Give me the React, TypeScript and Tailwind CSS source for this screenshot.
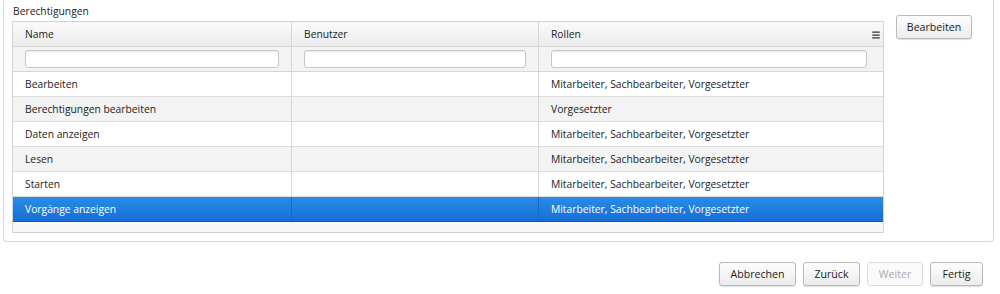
import { Menu } from 'lucide-react';

const rows = [
  { name: 'Bearbeiten', user: '', roles: 'Mitarbeiter, Sachbearbeiter, Vorgesetzter' },
  { name: 'Berechtigungen bearbeiten', user: '', roles: 'Vorgesetzter' },
  { name: 'Daten anzeigen', user: '', roles: 'Mitarbeiter, Sachbearbeiter, Vorgesetzter' },
  { name: 'Lesen', user: '', roles: 'Mitarbeiter, Sachbearbeiter, Vorgesetzter' },
  { name: 'Starten', user: '', roles: 'Mitarbeiter, Sachbearbeiter, Vorgesetzter' },
  { name: 'Vorgänge anzeigen', user: '', roles: 'Mitarbeiter, Sachbearbeiter, Vorgesetzter' },
];

function Button({ label, disabled, className = '' }: { label: string; disabled?: boolean; className?: string }) {
  return (
    <button
      className={`h-6 rounded-[3px] border text-[10.6px] leading-none ${
        disabled
          ? 'border-[#dcdcdc] bg-[#fafafa] text-[#a8a8a8]'
          : 'border-[#b9b9b9] bg-gradient-to-b from-[#fdfdfd] to-[#ececec] text-[#222] shadow-[0_1px_1px_rgba(0,0,0,0.12)]'
      } ${className}`}
    >
      {label}
    </button>
  );
}

export default function App() {
  return (
    <div className="w-[1000px] h-[294px] bg-white font-['Open_Sans',sans-serif] text-[10.3px] text-[#222]">
      <div className="mx-[3px] w-[991px] h-[242px] border-x border-b border-[#d6d6d6] rounded-b-[4px] pl-[8px] pt-[3px]">
        <div className="h-[18px] leading-[16px] pl-px">Berechtigungen</div>
        <div className="flex items-start gap-[12px]">
          <div className="w-[872px] border border-[#d2d2d2] bg-[#f7f7f7]">
            <div className="flex h-[25px] border-b border-[#d6d6d6] bg-gradient-to-b from-[#fafafa] to-[#ececec]">
              <div className="w-[279px] border-r border-[#d6d6d6] pl-[12px] flex items-center pt-px">Name</div>
              <div className="w-[247px] border-r border-[#d6d6d6] pl-[12px] flex items-center pt-px">Benutzer</div>
              <div className="flex-1 pl-[12px] flex items-center pt-px">Rollen</div>
              <div className="w-[14px] flex items-center justify-center pt-px">
                <Menu className="w-[10px] h-[10px] text-[#333]" strokeWidth={3} />
              </div>
            </div>
            <div className="flex h-[25px] border-b border-[#d6d6d6] bg-[#f3f3f3]">
              <div className="w-[279px] border-r border-[#d6d6d6] px-[12px] flex items-center">
                <input className="w-full h-[18px] rounded-[3px] border border-[#c6c6c6] bg-white shadow-[inset_0_1px_1px_rgba(0,0,0,0.08)]" />
              </div>
              <div className="w-[247px] border-r border-[#d6d6d6] px-[12px] flex items-center">
                <input className="w-full h-[18px] rounded-[3px] border border-[#c6c6c6] bg-white shadow-[inset_0_1px_1px_rgba(0,0,0,0.08)]" />
              </div>
              <div className="flex-1 pl-[12px] pr-[16px] flex items-center">
                <input className="w-full h-[18px] rounded-[3px] border border-[#c6c6c6] bg-white shadow-[inset_0_1px_1px_rgba(0,0,0,0.08)]" />
              </div>
            </div>
            {rows.map((r, i) => {
              const selected = i === rows.length - 1;
              const rowCls = selected
                ? 'bg-gradient-to-b from-[#2a8ce8] to-[#166ed6] text-white border-b border-[#0f58b0]'
                : `${i % 2 === 0 ? 'bg-white' : 'bg-[#f3f3f3]'} border-b border-[#dcdcdc]`;
              const cellBorder = selected ? 'border-[#1a66c4]' : 'border-[#d6d6d6]';
              return (
                <div key={r.name} className={`flex h-[25px] ${rowCls}`}>
                  <div className={`w-[279px] border-r ${cellBorder} pl-[12px] flex items-center pt-px`}>{r.name}</div>
                  <div className={`w-[247px] border-r ${cellBorder} pl-[12px] flex items-center pt-px`}>{r.user}</div>
                  <div className="flex-1 pl-[12px] flex items-center pt-px">{r.roles}</div>
                </div>
              );
            })}
            <div className="h-[10px]" />
          </div>
          <Button label="Bearbeiten" className="w-[76px] mt-[-6px]" />
        </div>
      </div>
      <div className="flex justify-end gap-[7px] pr-[17px] pt-[20px]">
        <Button label="Abbrechen" className="w-[77px]" />
        <Button label="Zurück" className="w-[57px]" />
        <Button label="Weiter" disabled className="w-[56px]" />
        <Button label="Fertig" className="w-[53px]" />
      </div>
    </div>
  );
}
